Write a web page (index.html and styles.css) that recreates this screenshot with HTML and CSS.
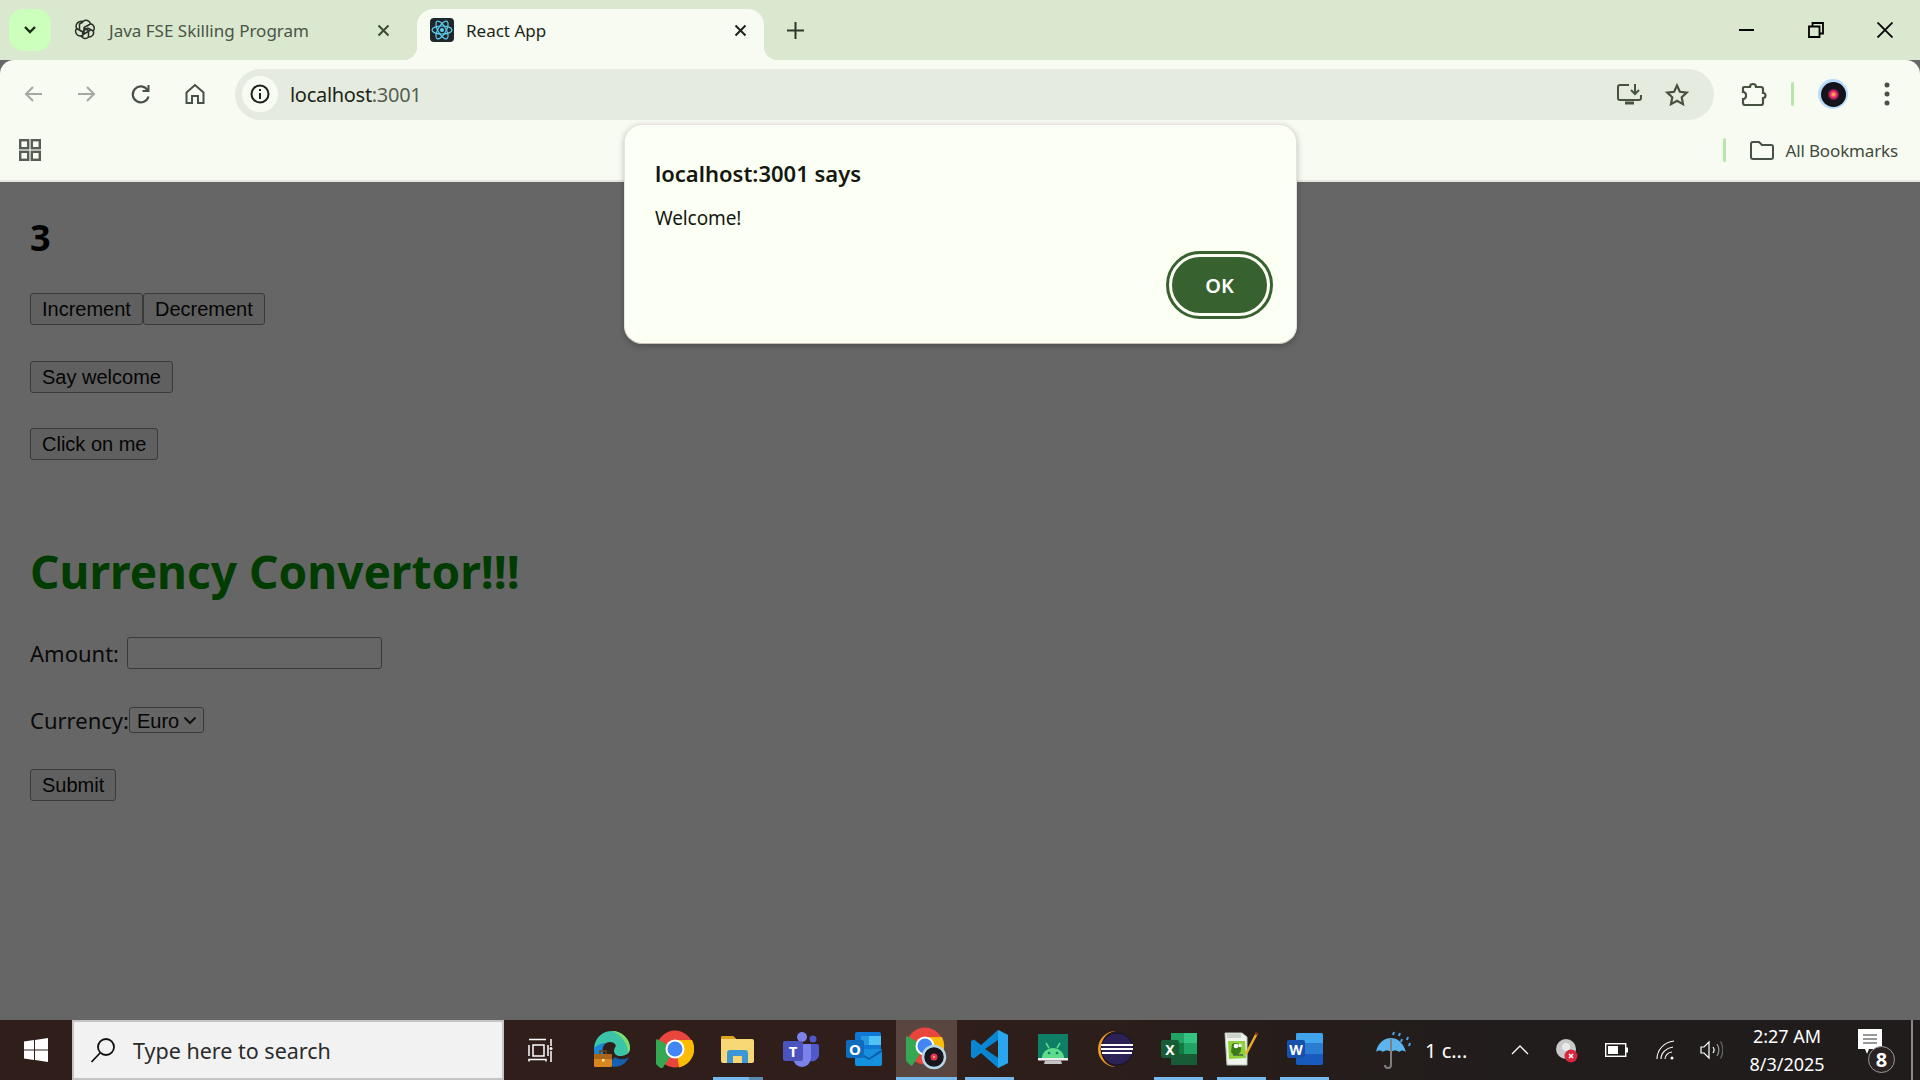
FILE: index.html
```html
<!DOCTYPE html>
<html>
<head>
	<meta charset="utf-8">
	<title>React App</title>
	<link rel="stylesheet" href="styles.css">
</head>
<body>
<div class="strip">
	<div class="tab-search"><svg width="14" height="10" viewBox="0 0 14 10"><path d="M2 2l5 5 5-5" fill="none" stroke="#1c2a18" stroke-width="2.4"/></svg></div>
	<div class="tab">
		<svg class="fav" width="22" height="22" viewBox="0 0 22 22" fill="none" stroke="#2a2f28" stroke-width="1.500"><path d="M9 2.500a4.500 4.500 0 0 1 7.500 2.300 4.500 4.500 0 0 1 2.800 7.200 4.500 4.500 0 0 1-4.800 6 4.500 4.500 0 0 1-7.500-1.200 4.500 4.500 0 0 1-4.300-7.300 4.500 4.500 0 0 1 2.800-6.700A4.500 4.500 0 0 1 9 2.500z"/><path d="M9 3L5.500 5v6l5 3M16.500 5l-6.500 3.500v5M19.300 12l-5.300-3-5 3M14.500 18v-6.500l-4.500-2.500M7 16.800l5.500-3.300 4-2.300M2.700 9.500l6 3.500v5"/></svg>
		<span class="tab-title">Java FSE Skilling Program</span>
		<svg class="tab-x" width="13" height="13" viewBox="0 0 13 13"><path d="M1.500 1.500l10 10M11.500 1.500l-10 10" stroke="#3c4a38" stroke-width="2"/></svg>
	</div>
	<div class="tab active">
		<svg class="fav" width="24" height="24" viewBox="0 0 24 24"><rect width="24" height="24" rx="4" fill="#20272b"/><g fill="none" stroke="#5ed3f3" stroke-width="1.200"><ellipse cx="12" cy="12" rx="10" ry="4"/><ellipse cx="12" cy="12" rx="10" ry="4" transform="rotate(60 12 12)"/><ellipse cx="12" cy="12" rx="10" ry="4" transform="rotate(120 12 12)"/></g><circle cx="12" cy="12" r="2" fill="#5ed3f3"/></svg>
		<span class="tab-title">React App</span>
		<svg class="tab-x" width="13" height="13" viewBox="0 0 13 13"><path d="M1.500 1.500l10 10M11.500 1.500l-10 10" stroke="#1c2418" stroke-width="2"/></svg>
	</div>
	<svg class="new-tab" width="17" height="17" viewBox="0 0 17 17"><path d="M8.500 0v17M0 8.500h17" stroke="#2c3828" stroke-width="2"/></svg>
	<div class="win-btns">
		<svg width="16" height="16" viewBox="0 0 16 16"><path d="M0 8h15" stroke="#000" stroke-width="2"/></svg>
		<svg width="16" height="16" viewBox="0 0 16 16"><path d="M1 4.500h10.500v10.500H1zM4.500 4.500V1H15v10.500h-3.500" fill="none" stroke="#000" stroke-width="1.800"/></svg>
		<svg width="16" height="16" viewBox="0 0 16 16"><path d="M.5.5l15 15M15.500.5l-15 15" stroke="#000" stroke-width="1.800"/></svg>
	</div>
</div>

<div class="toolbar">
	<svg class="nav" width="20" height="20" viewBox="0 0 20 20" fill="none" stroke="#a3a8a0" stroke-width="2"><path d="M19 10H3M10 3l-7 7 7 7"/></svg>
	<svg class="nav" width="20" height="20" viewBox="0 0 20 20" fill="none" stroke="#a3a8a0" stroke-width="2"><path d="M1 10h16M10 3l7 7-7 7"/></svg>
	<svg class="nav" width="20" height="22" viewBox="0 0 20 22" fill="none" stroke="#475243" stroke-width="2.200"><path d="M16.500 7a8 8 0 1 0 1 6.500"/><path d="M17.500 2v6h-6" stroke-width="2"/></svg>
	<svg class="nav" width="20" height="22" viewBox="0 0 20 22" fill="none" stroke="#475243" stroke-width="2"><path d="M1.500 9.500L10 2l8.500 7.500V20h-5.500v-7H7v7H1.500z"/></svg>
	<div class="omnibox">
		<span class="info"><svg width="20" height="20" viewBox="0 0 20 20" fill="none" stroke="#1c2418" stroke-width="2"><circle cx="10" cy="10" r="8.500"/><path d="M10 9v6M10 5v2"/></svg></span>
		<span class="url">localhost<span class="port">:3001</span></span>
		<svg class="install" width="25" height="22" viewBox="0 0 25 22" fill="none" stroke="#475243" stroke-width="2"><path d="M12 2H3a2 2 0 0 0-2 2v11a2 2 0 0 0 2 2h19a2 2 0 0 0 2-2v-3"/><path d="M18 1v9M14 7l4 4 4-4"/><path d="M8 20h9" stroke-width="3"/></svg>
		<svg class="star" width="24" height="23" viewBox="0 0 24 23" fill="none" stroke="#475243" stroke-width="2.200"><path d="M12 2.500l2.900 6.300 6.800.8-5 4.700 1.300 6.800-6-3.400-6 3.400 1.300-6.800-5-4.700 6.800-.8z"/></svg>
	</div>
	<svg class="puzzle" width="26" height="25" viewBox="0 0 26 25" fill="none" stroke="#475243" stroke-width="2.200"><path d="M3 5h6a3 3 0 0 1 6 0h5a2 2 0 0 1 2 2v4a2.500 2.500 0 0 1 0 5v5a2 2 0 0 1-2 2H4a2 2 0 0 1-2-2v-4a3 3 0 0 0 3-3.500A3 3 0 0 0 2 10V6a1 1 0 0 1 1-1z"/></svg>
	<span class="sep"></span>
	<span class="avatar"><span class="disc"></span></span>
	<svg class="dots" width="6" height="24" viewBox="0 0 6 24" fill="#475243"><circle cx="3" cy="3" r="2.500"/><circle cx="3" cy="12" r="2.500"/><circle cx="3" cy="21" r="2.500"/></svg>
</div>

<div class="bookmarks">
	<svg width="22" height="22" viewBox="0 0 22 22" fill="none" stroke="#565e52" stroke-width="2.400"><rect x="1.200" y="1.200" width="8" height="8"/><rect x="12.800" y="1.200" width="8" height="8"/><rect x="1.200" y="12.800" width="8" height="8"/><rect x="12.800" y="12.800" width="8" height="8"/></svg>
	<span class="sep bm-sep"></span>
	<svg class="folder" width="24" height="19" viewBox="0 0 24 19" fill="none" stroke="#475243" stroke-width="2"><path d="M1 3a2 2 0 0 1 2-2h6l3 3h9a2 2 0 0 1 2 2v10a2 2 0 0 1-2 2H3a2 2 0 0 1-2-2z"/></svg>
	<span class="bm-label">All Bookmarks</span>
</div>

<div class="page">
	<h2 class="count">3</h2>
	<div class="row first"><button>Increment</button><button>Decrement</button></div>
	<div class="row"><button>Say welcome</button></div>
	<div class="row"><button>Click on me</button></div>
	<h1 class="conv-title">Currency Convertor!!!</h1>
	<form>
		<div class="field amount"><label>Amount:</label><input type="text"></div>
		<div class="field currency"><label>Currency:</label><select><option>Euro</option></select></div>
		<button type="button">Submit</button>
	</form>
</div>

<div class="dialog">
	<div class="dlg-title">localhost:3001 says</div>
	<div class="dlg-msg">Welcome!</div>
	<div class="dlg-actions"><button class="ok">OK</button></div>
</div>

<div class="taskbar">
	<div class="start"><svg width="24" height="24" viewBox="0 0 24 24" fill="#fff"><path d="M0 3.400l10-1.400v9.400H0zM11 1.900L24 0v11.400H11zM0 12.500h10V22L0 20.600zM11 12.500h13V24l-13-1.900z"/></svg></div>
	<div class="search">
		<svg width="26" height="26" viewBox="0 0 26 26" fill="none" stroke="#111" stroke-width="1.800"><circle cx="16" cy="10" r="8"/><path d="M10 16L1.500 25"/></svg>
		<span>Type here to search</span>
	</div>
	<div class="taskview"><svg width="25" height="25" viewBox="0 0 25 25" fill="none" stroke="#fff" stroke-width="1.500"><path d="M1 1.500h17M5 7h11v11H5zM1 7v11M20 7v11M1 23.500v-2h17v2M23 1v7M23 13v11"/><circle cx="23" cy="10.500" r="1.500" fill="#fff" stroke="none"/></svg></div>

	<div class="task"><svg width="38" height="38" viewBox="0 0 38 38"><path d="M1 18C2 7 10 1 19 1c10 0 18 8 18 17 0 6-5 8-10 8-3 0-6-2-6-5 0-4 3-4 1-7-2-2-5-3-9-1C8 15 4 16 1 18z" fill="#3cc4a8"/><path d="M19 1c10 0 18 8 18 17 0 2-1 4-2 5 0-9-6-18-16-22z" fill="#7fdc6a"/><path d="M1 18c3-3 8-5 12-5-4 3-4 8-2 12l-9 2c-1-3-1-6-1-9z" fill="#1a86d8"/><path d="M20 37c7 0 13-3 16-10-4 3-10 3-14 0-3 2-5 7-2 10z" fill="#1560b0"/><rect x="1" y="24" width="18" height="13" rx="1.500" fill="#d8861f"/><rect x="1" y="24" width="18" height="5" fill="#a9651a"/><path d="M7 24v-3h6v3" fill="none" stroke="#6d4410" stroke-width="1.500"/><rect x="9" y="29" width="2.500" height="2.500" fill="#ffe9a8"/></svg></div>
	<div class="task"><svg width="38" height="38" viewBox="0 0 38 38"><circle cx="19" cy="19" r="18.500" fill="#e8453c"/><path d="M19 19L6 39a19 19 0 0 1-5-30z" fill="#34a853"/><path d="M19 10h17a19 19 0 0 1-13 27.500z" fill="#fbbc05"/><circle cx="19" cy="19" r="9.500" fill="#fff"/><circle cx="19" cy="19" r="7.500" fill="#4285f4"/></svg></div>
	<div class="task running split"><svg width="33" height="28" viewBox="0 0 33 28"><path d="M0 3a2 2 0 0 1 2-2h10l3 3h16a2 2 0 0 1 2 2v20a2 2 0 0 1-2 2H2a2 2 0 0 1-2-2z" fill="#f8d775"/><path d="M0 3a2 2 0 0 1 2-2h10l3 3H0z" fill="#dfa51e"/><path d="M6 28V18a3 3 0 0 1 3-3h15a3 3 0 0 1 3 3v10h-6v-7h-9v7z" fill="#3d97d6"/></svg></div>
	<div class="task"><svg width="36" height="36" viewBox="0 0 36 36"><circle cx="19" cy="6" r="5" fill="#7b83eb"/><circle cx="30" cy="8" r="3.500" fill="#5059c9"/><path d="M24 13h10a2 2 0 0 1 2 2v9a7 7 0 0 1-11 5z" fill="#5059c9"/><path d="M10 13h18v14a9 9 0 0 1-18 0z" fill="#7b83eb"/><rect y="10" width="20" height="20" rx="2" fill="#4b53bc"/><text class="logo-letter" x="10" y="26" font-size="15" fill="#fff" text-anchor="middle">T</text></svg></div>
	<div class="task"><svg width="36" height="36" viewBox="0 0 36 36"><rect x="9" y="1" width="26" height="18" rx="2" fill="#0f78d4"/><rect x="23" y="5" width="12" height="9" fill="#4fc3f7"/><rect x="15" y="5" width="8" height="9" fill="#2896dc"/><path d="M9 18h27v15a2 2 0 0 1-2 2H11a2 2 0 0 1-2-2z" fill="#1490df"/><path d="M9 18l14 9 13-9v3l-13 8-14-8z" fill="#0a5fa8"/><rect y="9" width="18" height="18" rx="2" fill="#0f6cbd"/><text class="logo-letter" x="9" y="24" font-size="15" fill="#fff" text-anchor="middle">O</text></svg></div>
	<div class="task active"><svg width="42" height="44" viewBox="0 0 42 44"><circle cx="19" cy="19" r="18.500" fill="#e8453c"/><path d="M19 19L6 39a19 19 0 0 1-5-30z" fill="#34a853"/><path d="M19 10h17a19 19 0 0 1-13 27.500z" fill="#fbbc05"/><circle cx="19" cy="19" r="9.500" fill="#fff"/><circle cx="19" cy="19" r="7.500" fill="#4285f4"/><circle cx="28" cy="30" r="11" fill="#16161c" stroke="#b7d6e6" stroke-width="2.500"/><circle cx="28" cy="30" r="3.500" fill="#e8305a"/><circle cx="28" cy="30" r="1.200" fill="#ffb14a"/></svg></div>
	<div class="task running"><svg width="37" height="38" viewBox="0 0 37 38"><path d="M27 0l10 5v28l-10 5-17-15-7 5.500L0 27V11l3-1.500L10 15z" fill="#0a85d1"/><path d="M27 0l10 5v28l-10 5z" fill="#2aa6ee"/><path d="M27 10L14 19l13 9z" fill="#302421"/></svg></div>
	<div class="task"><svg width="30" height="30" viewBox="0 0 30 30"><rect width="30" height="24" fill="#0e7f66"/><path d="M4 24a11 10 0 0 1 22 0z" fill="#5fdc8a"/><path d="M8 9l3 5M22 9l-3 5" stroke="#5fdc8a" stroke-width="1.500"/><circle cx="11" cy="19" r="1.300" fill="#0e7f66"/><circle cx="19" cy="19" r="1.300" fill="#0e7f66"/><rect y="24" width="30" height="2.500" fill="#eee"/><path d="M7 26.500h16l1 3.500H6z" fill="#c4c4c4"/></svg></div>
	<div class="task"><svg width="37" height="36" viewBox="0 0 37 36"><path d="M19 0A18 18 0 0 0 19 36C9 35 4 27 4 18S9 1 19 0z" fill="#f39a1f"/><circle cx="20" cy="18" r="16" fill="#2c2255" stroke="#15112e"/><path d="M4 14h32M4 18h32M5 22h30" stroke="#fff" stroke-width="1.800"/></svg></div>
	<div class="task running"><svg width="36" height="32" viewBox="0 0 36 32"><path d="M10 0h24a2 2 0 0 1 2 2v28a2 2 0 0 1-2 2H10z" fill="#107c41"/><rect x="23" y="0" width="13" height="10" fill="#33c481"/><rect x="10" y="0" width="13" height="10" fill="#21a366"/><rect x="23" y="10" width="13" height="11" fill="#21a366"/><rect x="10" y="21" width="26" height="11" fill="#185c37"/><rect y="7" width="18" height="18" rx="2" fill="#185c37"/><text class="logo-letter" x="9" y="21.500" font-size="14" fill="#fff" text-anchor="middle">X</text></svg></div>
	<div class="task running"><svg width="35" height="34" viewBox="0 0 35 34"><path d="M1 1h17l5 4v28H3z" fill="#eef3ec" stroke="#bcc4b8"/><path d="M3 3h14M3 5h14" stroke="#9aa39a" stroke-width=".8"/><path d="M4 9h17l1 17-17 1z" fill="#8fd13a"/><path d="M8 12c5-3 10 1 9 6-1 6-8 6-10 2z" fill="#3d7a1c"/><circle cx="12" cy="14" r="2.300" fill="#fff"/><circle cx="16" cy="13.500" r="1.800" fill="#fff"/><path d="M9 23h10" stroke="#233" stroke-width="1"/><path d="M22 22L33 1" stroke="#e9ad26" stroke-width="2.500"/><path d="M32 3l1-2" stroke="#8a2a20" stroke-width="2.500"/></svg></div>
	<div class="task running"><svg width="36" height="32" viewBox="0 0 36 32"><path d="M9 0h25a2 2 0 0 1 2 2v28a2 2 0 0 1-2 2H11a2 2 0 0 1-2-2z" fill="#185abd"/><path d="M9 2a2 2 0 0 1 2-2h23a2 2 0 0 1 2 2v8H9z" fill="#41a5ee"/><rect x="9" y="10" width="27" height="11" fill="#2b7cd3"/><rect y="7" width="18" height="18" rx="2" fill="#1651ab"/><text class="logo-letter" x="9" y="21.500" font-size="14" fill="#fff" text-anchor="middle">W</text></svg></div>

	<div class="tray">
		<svg class="umbrella" width="36" height="38" viewBox="0 0 36 38"><path d="M0 21C2 11 9 7 15 7s12 4 15 14c-3-2-5-2-7 0-2-2-6-2-8 0-2-2-6-2-8 0-2-2-5-2-7 0z" fill="#5cb4ec"/><path d="M15 8v26a3 3 0 0 1-6 0" fill="none" stroke="#808080" stroke-width="2"/><path d="M18 1l-1 3M24 2l-1 3M32 6l-1 3M26 8l-1 3M34 12l-1 3" stroke="#4aa8e8" stroke-width="2"/></svg>
		<span class="weather">1 c...</span>
		<svg class="chev" width="18" height="10" viewBox="0 0 18 10"><path d="M1 9l8-8 8 8" fill="none" stroke="#fff" stroke-width="1.300"/></svg>
		<svg class="rec" width="22" height="25" viewBox="0 0 22 25"><circle cx="10" cy="11" r="10" fill="#c9c9c9"/><circle cx="10" cy="9" r="4" fill="#e9e9e9"/><circle cx="15" cy="18" r="6.500" fill="#d8263c"/><path d="M13 16l4 4M17 16l-4 4" stroke="#fff" stroke-width="1.600"/></svg>
		<svg class="batt" width="23" height="14" viewBox="0 0 23 14"><rect x=".7" y=".7" width="20" height="12.600" fill="none" stroke="#fff" stroke-width="1.400"/><rect x="3" y="3" width="10" height="8" fill="#fff"/><rect x="21" y="4.500" width="2" height="5" fill="#fff"/></svg>
		<svg class="wifi" width="19" height="20" viewBox="0 0 19 20" fill="none" stroke="#fff" stroke-width="1.100"><path d="M1 19C1 10 8 2 18 1"/><path d="M5 19c0-6 5-11 12-12"/><path d="M9 19c0-3 3-7 7-7"/><circle cx="16" cy="18" r="1.500" fill="#fff" stroke="none"/></svg>
		<svg class="vol" width="23" height="20" viewBox="0 0 23 20" fill="none" stroke="#fff" stroke-width="1.200"><path d="M1 7h3l5-5v16l-5-5H1z"/><path d="M13 7c1.500 2 1.500 4 0 6"/><path d="M17 4c2.500 4 2.500 8 0 12" stroke="#999"/><path d="M20.500 1.500c3 5 3 12 0 17" stroke="#666"/></svg>
		<div class="clock"><div>2:27 AM</div><div>8/3/2025</div></div>
		<div class="notify"><svg width="25" height="27" viewBox="0 0 25 27"><path d="M0 0h24v20H11l-2 5-2-5H0z" fill="#fff"/><path d="M5 6h14M5 10h14M5 14h14" stroke="#333" stroke-width="1.200"/></svg><span class="badge">8</span></div>
		<span class="show-desktop"></span>
	</div>
</div>
</body>
</html>
```

FILE: styles.css
```css
html,body{
	margin: 0;
	height: 100%;
}
body{
	width: 1920px;
	height: 1080px;
	position: relative;
	display: flex;
	flex-direction: column;
	overflow: hidden;
	background: #666;
	font-family: "Noto Sans",sans-serif;
}
/* tab strip */
.strip{
	height: 60px;
	flex: none;
	display: flex;
	background: #dae8cf;
	box-sizing: border-box;
	padding: 9px 0 0 9px;
}
.tab-search{
	width: 42px;
	height: 42px;
	border-radius: 14px;
	background: #ccffbb;
	display: flex;
	align-items: center;
	justify-content: center;
}
.tab{
	width: 366px;
	height: 51px;
	display: flex;
	align-items: center;
	box-sizing: border-box;
	padding: 0 27px 9px 23px;
	font-size: 17px;
	color: #4a5446;
}
.tab .fav{
	margin-right: 13px;
	flex: none;
}
.tab-title{
	flex: 1;
	white-space: nowrap;
}
.tab.active{
	width: 347px;
	padding: 0 17px 9px 13px;
	background: #f8fbf2;
	border-radius: 16px 16px 0 0;
	color: #1c2418;
	position: relative;
}
.tab.active .fav{
	margin-right: 12px;
}
.tab.active:before,.tab.active:after{
	content: "";
	position: absolute;
	bottom: 0;
	width: 14px;
	height: 14px;
}
.tab.active:before{
	left: -14px;
	background: radial-gradient(circle at 0 0,transparent 14px,#f8fbf2 14.500px);
}
.tab.active:after{
	right: -14px;
	background: radial-gradient(circle at 100% 0,transparent 14px,#f8fbf2 14.500px);
}
.new-tab{
	margin: 13px 0 0 23px;
}
.win-btns{
	margin-left: auto;
	display: flex;
	gap: 53px;
	padding: 13px 27px 0 0;
	height: 16px;
}
/* toolbar */
.toolbar{
	height: 68px;
	flex: none;
	display: flex;
	align-items: center;
	background: #f8fbf2;
	border-radius: 14px 14px 0 0;
	padding: 0 0 0 23px;
	box-sizing: border-box;
}
.toolbar .nav{
	margin-right: 34px;
	flex: none;
}
.omnibox{
	width: 1479px;
	height: 51px;
	margin-left: -4px;
	flex: none;
	display: flex;
	align-items: center;
	background: #e5ecdf;
	border-radius: 26px;
	box-sizing: border-box;
	padding: 0 25px 0 7px;
}
.info{
	width: 36px;
	height: 36px;
	border-radius: 50%;
	background: #f8fbf2;
	display: flex;
	align-items: center;
	justify-content: center;
}
.url{
	margin-left: 12px;
	font-size: 20px;
	letter-spacing: -.3px;
	color: #1c2418;
	flex: 1;
}
.port{
	color: #55604f;
}
.star{
	margin-left: 23px;
}
.puzzle{
	margin-left: 27px;
	flex: none;
}
.sep{
	width: 3px;
	height: 24px;
	background: #b5e8a8;
	border-radius: 2px;
	flex: none;
}
.toolbar .sep{
	margin-left: 24px;
}
.avatar{
	width: 30px;
	height: 30px;
	margin-left: 24px;
	border-radius: 50%;
	background: #b9dcfb;
	display: flex;
	align-items: center;
	justify-content: center;
	flex: none;
}
.disc{
	width: 25px;
	height: 25px;
	border-radius: 50%;
	background: radial-gradient(circle,#ffd23c 0,#f0306a 3px,#c4206a 4px,#18141e 6px,#0c0c14 100%);
}
.dots{
	margin-left: 36px;
	flex: none;
}
.bookmarks{
	height: 54px;
	flex: none;
	display: flex;
	align-items: center;
	box-sizing: border-box;
	background: #f8fbf2;
	border-bottom: 2px solid #e4e6df;
	padding: 0 22px 8px 19px;
}
.bm-sep{
	margin-left: auto;
}
.folder{
	margin: 0 12px 0 24px;
}
.bm-label{
	font-size: 17px;
	letter-spacing: -.15px;
	color: #3f4a3c;
}
/* dimmed page */
.page{
	flex: 1;
	padding: 32px 0 0 30px;
	min-height: 0;
	color: #000;
}
.count{
	margin: 0 0 31px;
	font-size: 36px;
	line-height: 48px;
	font-weight: 700;
}
.row{
	display: flex;
	margin-bottom: 35px;
}
.row.first{
	margin-bottom: 36px;
}
.page button{
	height: 32px;
	box-sizing: border-box;
	padding: 0 11px;
	font: 20px "Liberation Sans",Arial,sans-serif;
	color: #050505;
	background: #606060;
	border: 1.500px solid #3a3a3a;
	border-radius: 3px;
}
.conv-title{
	margin: 77px 0 0;
	font-size: 46px;
	line-height: 68px;
	font-weight: 700;
	color: #003c00;
}
.field{
	display: flex;
	align-items: center;
	font-size: 22px;
	color: #0a0a0a;
}
.amount{
	margin-top: 32px;
	height: 32px;
}
.amount input{
	width: 255px;
	height: 32px;
	box-sizing: border-box;
	margin-left: 8px;
	background: #666;
	border: 1.500px solid #3a3a3a;
	border-radius: 3px;
}
.currency{
	margin-top: 38px;
	height: 26px;
	margin-bottom: 36px;
}
.currency select{
	width: 75px;
	height: 26px;
	box-sizing: border-box;
	padding: 1px 0 0 7px;
	font: 20px "Liberation Sans",Arial,sans-serif;
	color: #050505;
	appearance: none;
	background: #666 url("data:image/svg+xml,%3Csvg xmlns='http://www.w3.org/2000/svg' width='14' height='9'%3E%3Cpath d='M1.500 1.500L7 7l5.500-5.500' fill='none' stroke='%23111' stroke-width='2'/%3E%3C/svg%3E") no-repeat right 6px center;
	border: 1.500px solid #3a3a3a;
	border-radius: 3px;
}
/* alert */
.dialog{
	position: absolute;
	left: 624px;
	top: 124px;
	width: 673px;
	height: 220px;
	box-sizing: border-box;
	padding: 32px 20px 0 30px;
	background: #fcfff4;
	border: 1px solid #e9e2da;
	border-bottom-color: #c9c1b8;
	border-radius: 18px;
	box-shadow: 0 2px 6px rgba(0,0,0,.25);
	color: #14180f;
}
.dlg-title{
	font-size: 22px;
	font-weight: 600;
	line-height: 32px;
}
.dlg-msg{
	margin-top: 15px;
	font-size: 19px;
	letter-spacing: -.1px;
	line-height: 28px;
}
.dlg-actions{
	display: flex;
	justify-content: flex-end;
	margin-top: 19px;
}
.ok{
	width: 101px;
	height: 62px;
	border: 3px solid #fcfff4;
	outline: 3px solid #386130;
	border-radius: 31px;
	background: #386130;
	color: #fff;
	font: 600 20px "Noto Sans",sans-serif;
	margin: 3px 6px 0 0;
}
/* taskbar */
.taskbar{
	height: 60px;
	flex: none;
	display: flex;
	align-items: center;
	background: linear-gradient(90deg,#2f1e1a,#2f1e1a 50%,#221d1c 75%,#201c1c);
	color: #fff;
}
.start{
	width: 72px;
	display: flex;
	justify-content: center;
	flex: none;
}
.search{
	width: 432px;
	height: 60px;
	flex: none;
	box-sizing: border-box;
	display: flex;
	align-items: center;
	gap: 17px;
	padding-left: 16px;
	background: #f2f2f2;
	border: 2px solid #c4c4c4;
	color: #2b2b2b;
	font-size: 21.500px;
}
.taskview{
	width: 72px;
	margin-right: 4px;
	display: flex;
	justify-content: center;
	flex: none;
}
.task{
	width: 61px;
	height: 60px;
	margin: 0 1px;
	flex: none;
	display: flex;
	align-items: center;
	justify-content: center;
	position: relative;
}
.task svg{
	margin-top: -3px;
}
.task.active{
	background: #5a4641;
}
.task.running:after,.task.active:after{
	content: "";
	position: absolute;
	bottom: 0;
	left: 6px;
	right: 6px;
	height: 3px;
	background: #76b9ed;
}
.task.active:after{
	left: 0;
	right: 0;
}
.task.split:after{
	right: 19px;
}
.task.split:before{
	content: "";
	position: absolute;
	bottom: 0;
	left: 42px;
	width: 14px;
	height: 3px;
	background: #5a8cb0;
}
.logo-letter{
	font-family: "Noto Sans",sans-serif;
	font-weight: 700;
}
.tray{
	display: flex;
	align-items: center;
	padding-left: 40px;
	height: 60px;
	flex: none;
}
.weather{
	width: 41px;
	margin-left: 13px;
	font-size: 20px;
	white-space: nowrap;
}
.chev{
	margin-left: 45px;
}
.rec{
	margin-left: 27px;
}
.batt{
	margin-left: 27px;
}
.wifi{
	margin-left: 28px;
}
.vol{
	margin-left: 25px;
}
.clock{
	width: 100px;
	margin-left: 14px;
	text-align: center;
	font-size: 18px;
	line-height: 28px;
}
.notify{
	width: 37px;
	height: 42px;
	margin-left: 21px;
	position: relative;
}
.badge{
	position: absolute;
	left: 10px;
	bottom: -2px;
	width: 25px;
	height: 25px;
	border: 1px solid #999;
	border-radius: 50%;
	background: #2a2322;
	font-size: 20px;
	font-weight: 700;
	line-height: 25px;
	text-align: center;
}
.show-desktop{
	width: 2px;
	height: 60px;
	margin-left: 16px;
	background: #888;
}
```
